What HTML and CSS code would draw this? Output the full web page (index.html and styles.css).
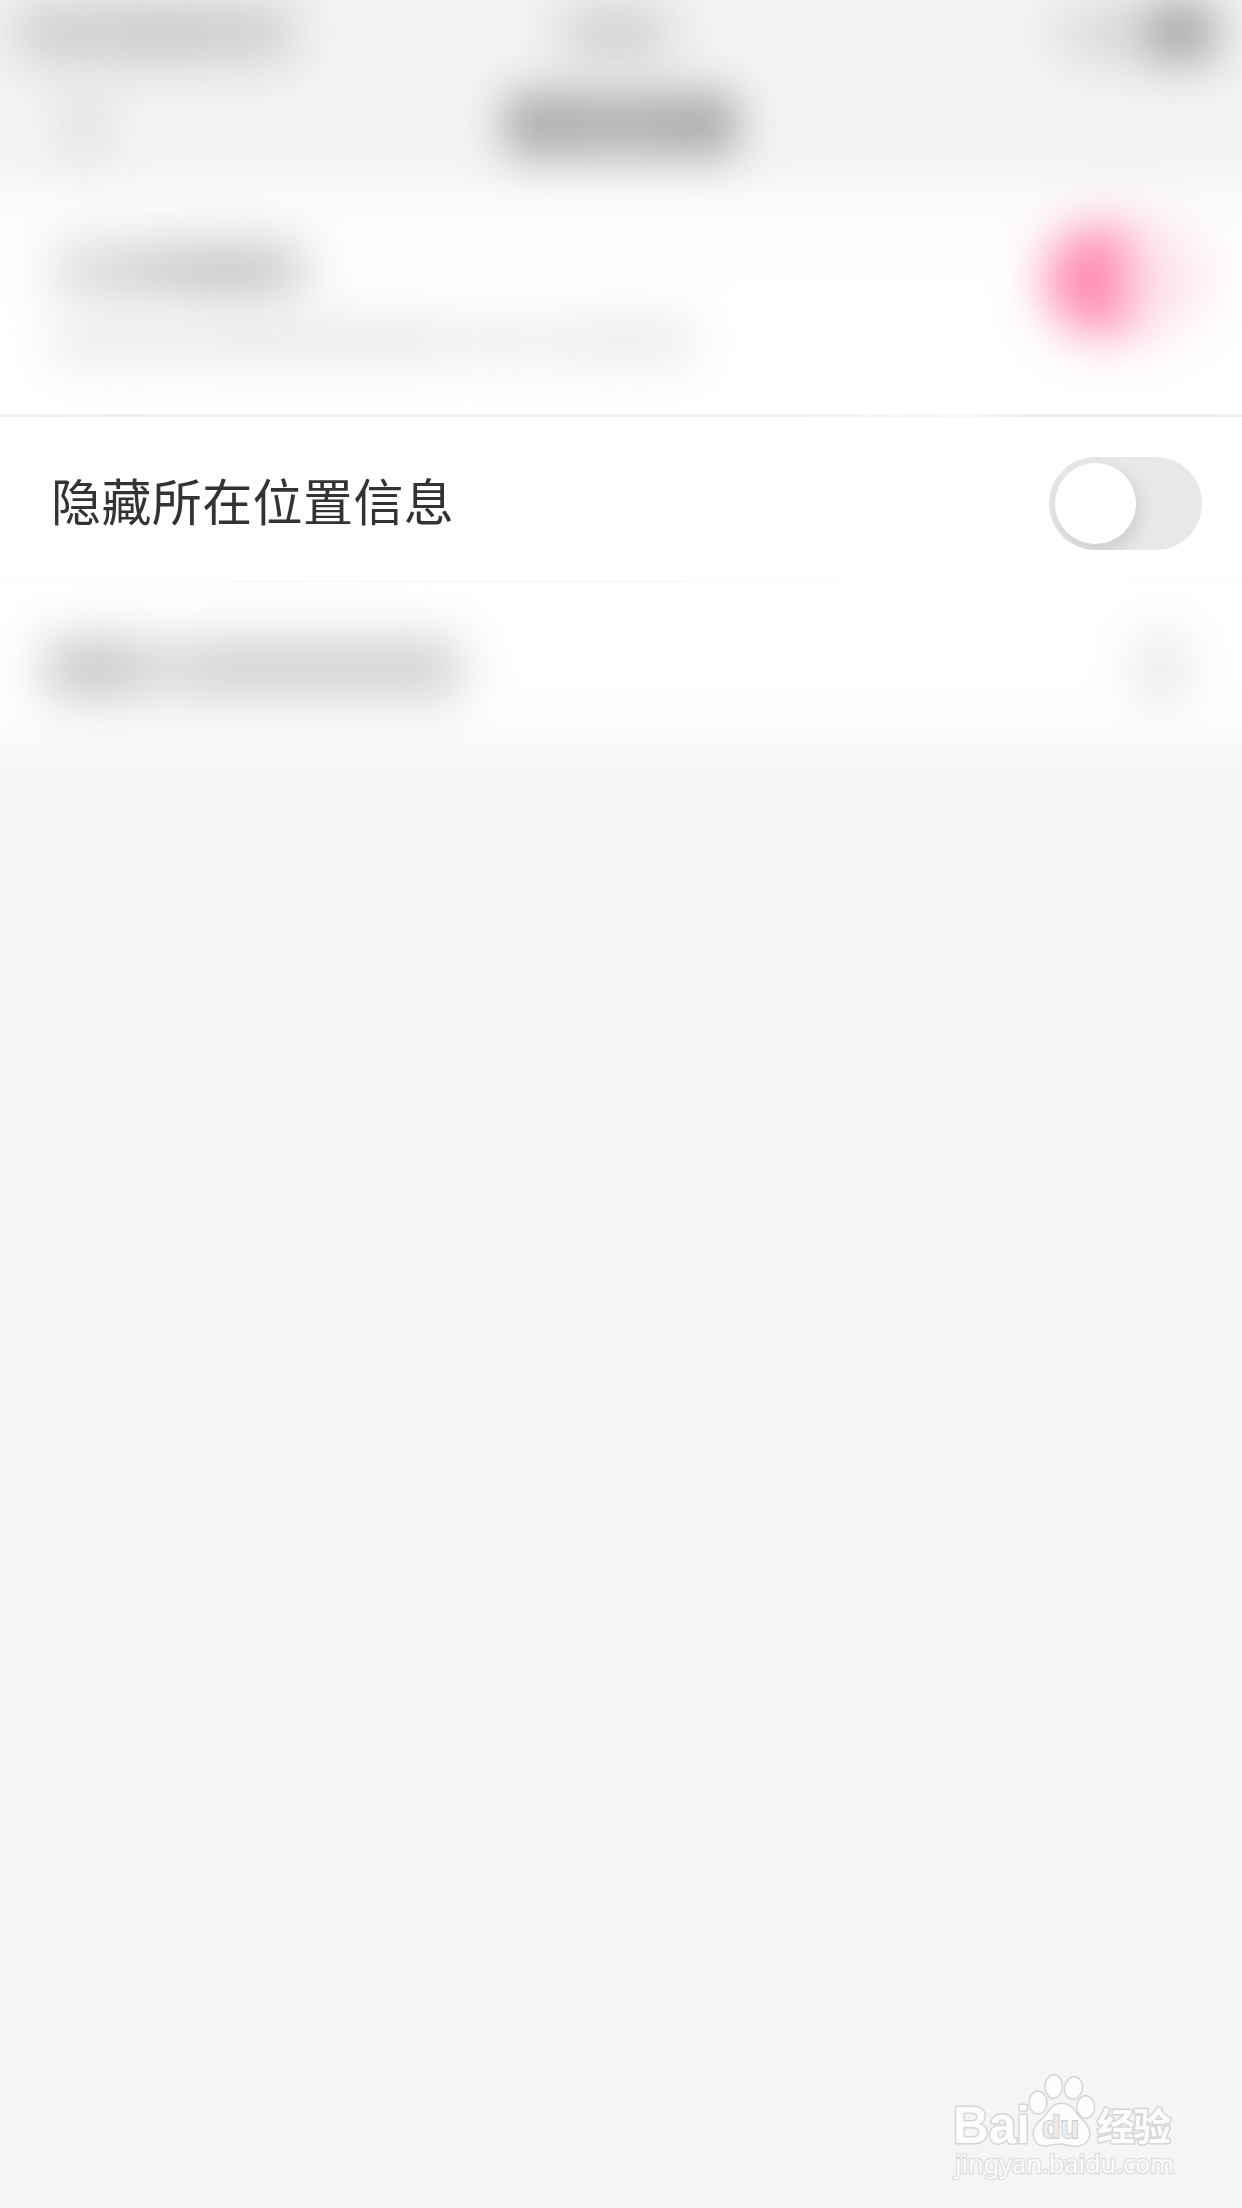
FILE: index.html
```html
<!DOCTYPE html>
<html lang="zh-CN">
<head>
<meta charset="utf-8">
<title>隐藏所在位置信息</title>
<link rel="stylesheet" href="styles.css">
</head>
<body>
<main class="screen">
  <header class="header">
    <div class="status">
      <span class="soft carrier"></span>
      <span class="soft clock"></span>
      <span class="status-right"><i class="soft charge"></i><i class="soft battery"></i></span>
    </div>
    <div class="nav">
      <span class="soft back"></span>
      <span class="soft title"></span>
      <span class="nav-end"></span>
    </div>
  </header>
  <section class="row first">
    <div class="labels">
      <span class="soft label"></span>
      <span class="soft note"><i></i><i></i><i></i><i></i></span>
    </div>
    <span class="soft switch-on"></span>
  </section>
  <section class="row location">
    <span class="text">隐藏所在位置信息</span>
    <span class="switch"><span class="knob"></span></span>
  </section>
  <section class="row last">
    <span class="soft entry"><i></i><i></i><i></i></span>
    <span class="soft arrow"></span>
  </section>
  <footer class="mark">
    <svg width="270" height="150" viewBox="0 0 270 150">
      <g class="outlined">
        <text x="23" y="93" class="brand" textLength="77" lengthAdjust="spacingAndGlyphs">Bai</text>
        <ellipse cx="108" cy="52.500" rx="8.200" ry="10.800"/>
        <ellipse cx="123.700" cy="36.500" rx="8" ry="11"/>
        <ellipse cx="143.500" cy="38" rx="8.200" ry="10.500" transform="rotate(12 143.500 38)"/>
        <ellipse cx="155.700" cy="57" rx="8.200" ry="10.500"/>
        <path d="M131 54C121 54 119 64 112 70C105 76 102 82 105 89C108 96 115 96 122 94C128 93 134 93 140 95C149 97 157 94 159 86C160 78 155 73 149 67C143 60 141 54 131 54Z"/>
        <text x="167" y="90" class="cn" textLength="74">经验</text>
      </g>
      <text x="112" y="88" class="du" textLength="37" lengthAdjust="spacingAndGlyphs">du</text>
      <text x="25" y="122.500" class="url" textLength="219" lengthAdjust="spacingAndGlyphs">jingyan.baidu.com</text>
    </svg>
  </footer>
</main>
</body>
</html>
```
FILE: styles.css
```css
* { box-sizing: border-box; }
body { margin: 0; background: #f5f5f5; }
.screen {
  width: 1242px;
  height: 2208px;
  display: flex;
  flex-direction: column;
  overflow: hidden;
  font-family: "Noto Sans CJK SC", sans-serif;
  background: linear-gradient(#f3f3f3 0, #f4f4f4 155px, #f6f6f6 175px, #fbfbfb 200px, #fdfdfd 230px, #fefefe 270px, #fff 300px, #fff 660px, #fefefe 712px, #fbfbfb 735px, #f8f8f8 755px, #f5f5f5 790px);
}
.soft { display: block; filter: blur(24px); border-radius: 18px; box-shadow: 0 8px 50px 8px rgba(0, 0, 0, .035); }
.header { height: 192px; }
.status {
  height: 64px;
  display: grid;
  grid-template-columns: 1fr 110px 1fr;
  align-items: center;
  padding: 0 26px 0 18px;
}
.carrier { width: 276px; height: 52px; background: linear-gradient(90deg, #c8c8c8, #cecece 25%, #c5c5c5 50%, #cbcbcb 75%, #cfcfcf); }
.clock { width: 108px; height: 46px; background: #cecece; }
.status-right { display: flex; justify-content: flex-end; align-items: center; }
.charge { width: 84px; height: 42px; background: #d6d6d6; }
.battery { width: 72px; height: 56px; background: #9d9d9d; }
.nav {
  height: 120px;
  display: flex;
  align-items: center;
  justify-content: space-between;
  padding: 0 73px;
}
.back { width: 24px; height: 66px; background: #d6d6d6; }
.title { width: 234px; height: 64px; background: linear-gradient(90deg, #a9a9a9, #b4b4b4 50%, #a7a7a7); filter: blur(22px); }
.nav-end { width: 24px; }
.row {
  display: flex;
  justify-content: space-between;
  flex: none;
}
.first {
  height: 225px;
  padding: 51px 38px 0 54px;
  background: linear-gradient(90deg, #f0f0f0, #f1f1f1 60%, #f8f8f8 78%, #eee 83%, #f0f0f0) bottom / 100% 3px no-repeat;
}
.labels { display: flex; flex-direction: column; gap: 18px; }
.label { width: 252px; height: 56px; background: linear-gradient(90deg, #e2e2e2, #cecece 45%, #c5c5c5 70%, #d3d3d3); }
.note { display: flex; gap: 8px; height: 46px; box-shadow: 0 4px 44px 8px rgba(0, 0, 0, .012); }
.note i { width: 136px; background: #ebebeb; }
.note i:nth-child(2) { width: 248px; background: #e9e9e9; }
.note i:nth-child(3) { width: 96px; background: #efefef; }
.switch-on {
  width: 158px;
  height: 108px;
  margin-top: -17px;
  border-radius: 54px;
  background: linear-gradient(90deg, #ff86b0, #ff8cb4 48%, #fde2ea 54%, #fde8ef);
  box-shadow: 0 0 46px 8px rgba(255, 90, 150, .05);
}
.location {
  height: 166px;
  align-items: center;
  padding: 7px 40px 0 51px;
  background: linear-gradient(90deg, #fdfdfd, #fafafa 50%, #fff 75%, #fff 85%, #fcfcfc) bottom / 100% 3px no-repeat;
}
.text { color: #333; font-size: 50px; line-height: 70px; letter-spacing: .4px; padding-bottom: 9px; }
.switch {
  width: 153px;
  height: 93px;
  padding: 6px;
  border-radius: 47px;
  background: #e8e8ea;
  overflow: hidden;
}
.knob {
  display: block;
  width: 81px;
  height: 81px;
  border-radius: 50%;
  background: #fff;
  box-shadow: 3px 7px 18px rgba(0, 0, 0, .13);
}
.last { height: 168px; align-items: center; padding: 2px 56px 0 46px; }
.entry { display: flex; height: 58px; }
.entry i { width: 90px; background: #c9c9c9; }
.entry i:nth-child(2) { width: 60px; background: #dcdcdc; }
.entry i:nth-child(3) { width: 264px; background: #d2d2d2; }
.arrow { width: 50px; height: 72px; background: #e9e9e9; box-shadow: 0 0 50px 10px rgba(0, 0, 0, .015); }
.mark { margin: auto 42px 8px auto; width: 270px; height: 150px; }
.mark svg { display: block; }
.outlined { fill: #fdfdfd; stroke: #d5d5d5; stroke-width: 3px; paint-order: stroke; stroke-linejoin: round; }
.brand { font: bold 51px "Liberation Sans", sans-serif; }
.cn { font: 700 38px "Noto Sans CJK SC", sans-serif; }
.du { font: bold 32px "Liberation Sans", sans-serif; fill: #ececec; stroke: #cacaca; stroke-width: 2px; paint-order: stroke; }
.url { font: 25px "Noto Sans", sans-serif; fill: #fcfcfc; stroke: #dcdcdc; stroke-width: 2.4px; paint-order: stroke; }
```
